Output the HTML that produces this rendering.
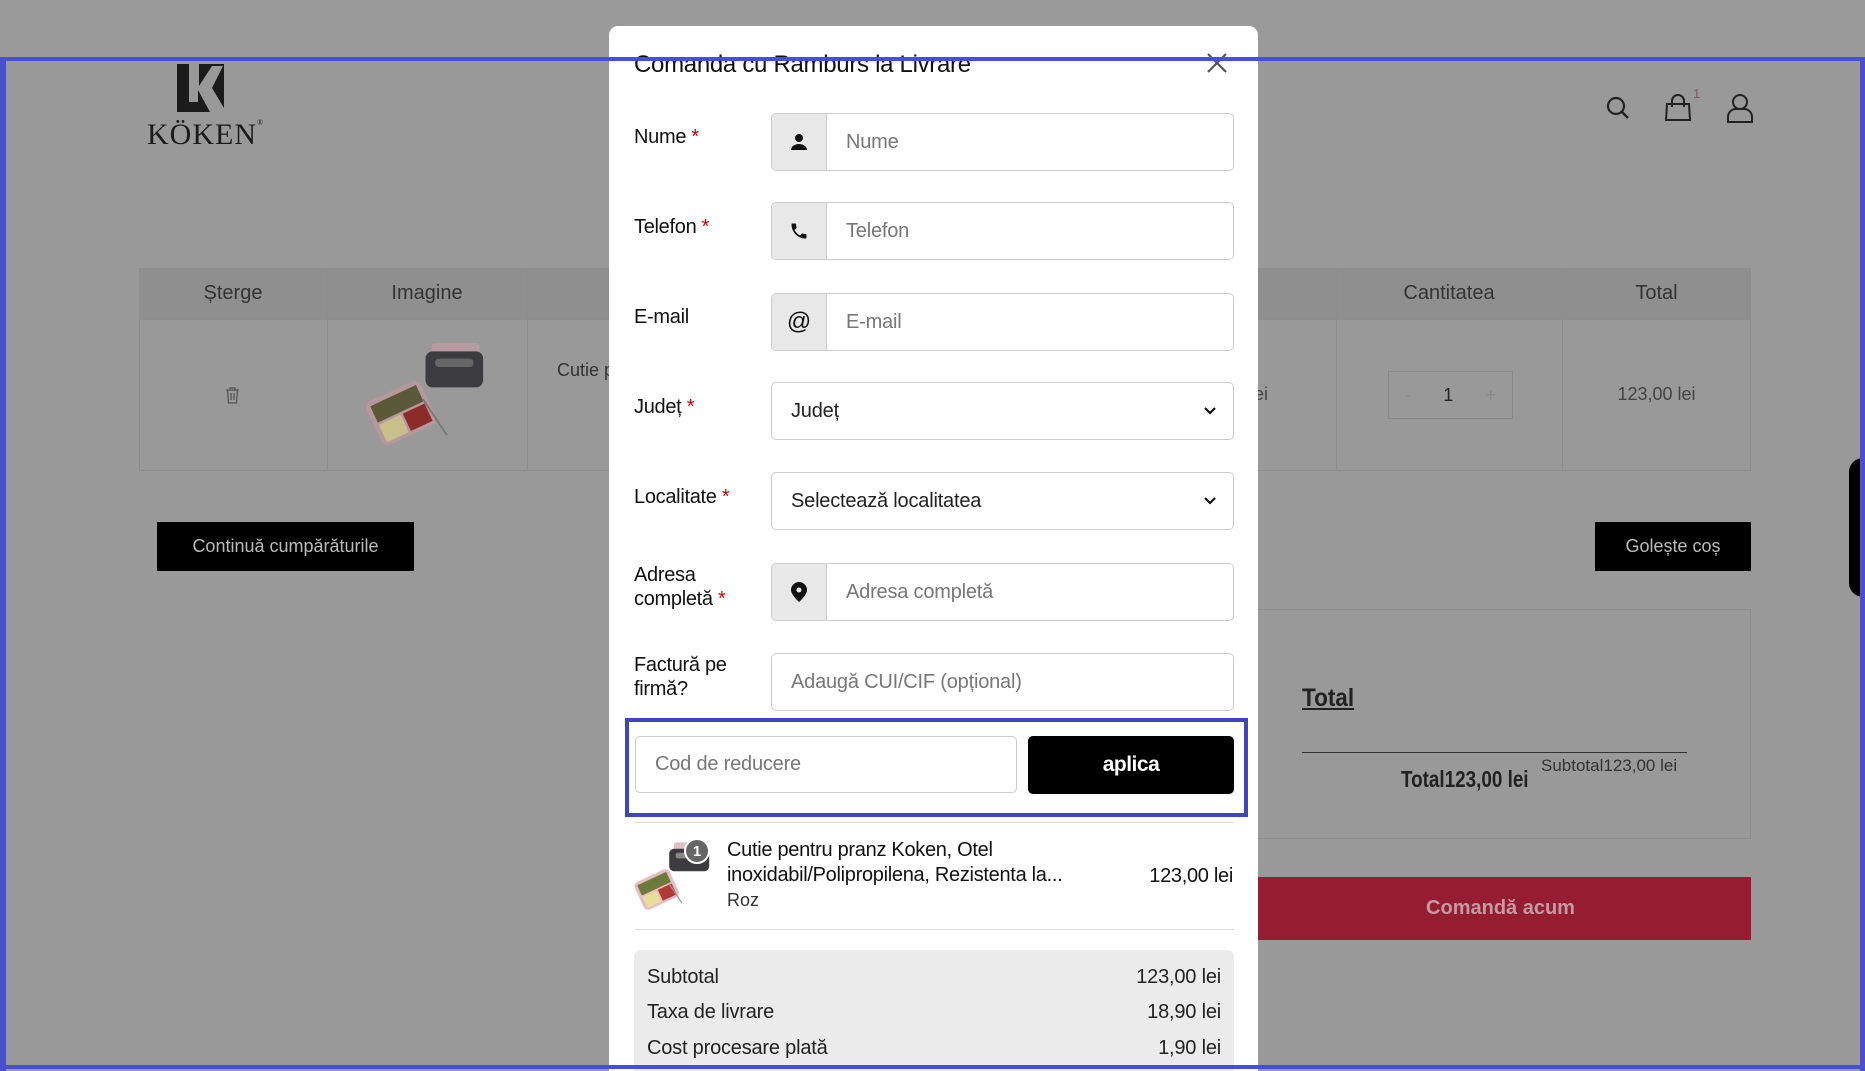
<!DOCTYPE html>
<html><head><meta charset="utf-8">
<style>
*{box-sizing:border-box;margin:0;padding:0}
html,body{width:1865px;height:1071px;overflow:hidden}
body{background:#999;font-family:"Liberation Sans","DejaVu Sans",sans-serif;position:relative;color:#222}
.abs{position:absolute}
.pg{color:#333}
.th{background:#8f8f8f}
.cell{border:1px solid #8d8d8d}
.btn{background:#000;color:#bbb;font-size:18px;display:flex;align-items:center;justify-content:center}
#modal{position:absolute;left:609px;top:26px;width:649px;height:1045px;background:#fff;border-radius:9px 9px 0 0;overflow:hidden}
.lbl{position:absolute;left:25px;font-size:20px;color:#111;letter-spacing:-0.3px;line-height:24px}
.req{color:#c00}
.inp{position:absolute;left:162px;width:463px;height:58px;border:1px solid #ccc;border-radius:5px;display:flex;align-items:center;font-size:20px;color:#777;overflow:hidden;letter-spacing:-0.2px}
.add{width:55px;height:100%;background:#e8e8e8;border-right:1px solid #ccc;display:flex;align-items:center;justify-content:center;flex:none}
.inp .t{padding-left:19px}
.sel{color:#222}
.chev{position:absolute;right:16px;top:21px}
.sr{position:absolute;left:13px;right:13px;display:flex;justify-content:space-between;font-size:20px;color:#222;letter-spacing:-0.2px}
</style></head><body>
<div class="abs" style="left:0;top:0;width:1865px;height:59px;background:#9a9a9a"></div>
<svg class="abs" style="left:176px;top:64px" width="50" height="50" viewBox="0 0 50 50"><rect x="1" y="0" width="47" height="48" fill="#1b1b1b"/><path d="M13 0 L13 38 L22 38 L22 26 L34 48 L48 48 L48 44 L36 24 L47 2 L36 2 L23 22 L23 0 Z" fill="#999"/></svg>
<div class="abs" style="left:147px;top:118px;font-size:30px;font-family:'Liberation Serif',serif;color:#1b1b1b;letter-spacing:1px">KÖKEN<span style="font-size:8px;vertical-align:top">®</span></div>
<svg class="abs" style="left:1605px;top:95px" width="26" height="26" viewBox="0 0 26 26"><circle cx="11" cy="11" r="8" fill="none" stroke="#222" stroke-width="2.2"/><path d="M17 17 L23 23" stroke="#222" stroke-width="2.4"/></svg>
<svg class="abs" style="left:1664px;top:93px" width="28" height="30" viewBox="0 0 28 30"><path d="M3 11 H25 L26 27 H2 Z" fill="none" stroke="#222" stroke-width="2"/><path d="M8 14 V8 a6 6 0 0 1 12 0 V14" fill="none" stroke="#222" stroke-width="2"/></svg>
<div class="abs" style="left:1693px;top:86px;font-size:13px;color:#7a5a66">1</div>
<svg class="abs" style="left:1726px;top:92px" width="28" height="32" viewBox="0 0 28 32"><circle cx="14" cy="10" r="7" fill="none" stroke="#222" stroke-width="2"/><path d="M2 30 V25 a8 8 0 0 1 8 -8 H18 a8 8 0 0 1 8 8 V30 Z" fill="none" stroke="#222" stroke-width="2"/></svg>
<div class="abs th" style="left:139px;top:268px;width:1612px;height:51px"></div>
<div class="abs cell" style="left:139px;top:268px;width:1612px;height:203px"></div>
<div class="abs" style="left:139px;top:319px;width:1612px;height:1px;background:#8d8d8d"></div>
<div class="abs" style="left:327px;top:268px;width:1px;height:203px;background:#8d8d8d"></div>
<div class="abs" style="left:527px;top:268px;width:1px;height:203px;background:#8d8d8d"></div>
<div class="abs" style="left:1336px;top:268px;width:1px;height:203px;background:#8d8d8d"></div>
<div class="abs" style="left:1562px;top:268px;width:1px;height:203px;background:#8d8d8d"></div>
<div class="abs pg" style="left:139px;width:188px;top:282px;text-align:center;font-size:20px">Șterge</div>
<div class="abs pg" style="left:327px;width:200px;top:282px;text-align:center;font-size:20px">Imagine</div>
<div class="abs pg" style="left:1336px;width:226px;top:282px;text-align:center;font-size:20px">Cantitatea</div>
<div class="abs pg" style="left:1562px;width:189px;top:282px;text-align:center;font-size:20px">Total</div>
<div class="abs pg" style="left:1250px;top:384px;font-size:18px;color:#444">lei</div>
<svg class="abs" style="left:225px;top:387px" width="15" height="17" viewBox="0 0 15 17"><path d="M1 3 H14 M5 3 V1 H10 V3 M2.5 3 L3.5 16 H11.5 L12.5 3 M6 6 V13 M9 6 V13" fill="none" stroke="#555" stroke-width="1.3"/></svg>
<div class="abs" style="left:557px;top:360px;font-size:18px;color:#333">Cutie p</div>
<svg class="abs" style="left:363px;top:337px" width="125" height="120" viewBox="0 0 100 100">
<rect x="55" y="5" width="40" height="30" rx="3" fill="#b79aa0"/>
<rect x="50" y="12" width="48" height="30" rx="6" fill="#3c3c40"/>
<rect x="58" y="18" width="32" height="7" rx="3" fill="#666"/>
<g transform="rotate(-25 28 62)"><rect x="4" y="44" width="50" height="40" rx="6" fill="#b7979e"/><rect x="8" y="48" width="42" height="15" fill="#5a5a38"/><rect x="8" y="65" width="20" height="16" fill="#c8bf8a"/><rect x="30" y="65" width="20" height="16" fill="#8b2c2a"/></g>
<path d="M48 52 L68 82" stroke="#777" stroke-width="1.5"/>
</svg>
<div class="abs" style="left:1388px;top:371px;width:125px;height:48px;border:1px solid #888;display:flex;align-items:center;justify-content:space-around;font-size:18px;color:#222"><span style="color:#888">-</span><span>1</span><span style="color:#888">+</span></div>
<div class="abs" style="left:1562px;width:189px;top:384px;text-align:center;font-size:18px;color:#444">123,00 lei</div>
<div class="abs btn" style="left:157px;top:522px;width:257px;height:49px">Continuă cumpărăturile</div>
<div class="abs btn" style="left:1595px;top:522px;width:156px;height:49px">Golește coș</div>
<div class="abs" style="left:1250px;top:609px;width:501px;height:230px;border:1px solid #8f8f8f"></div>
<div class="abs" style="left:1302px;top:684px;font-size:25px;font-weight:bold;color:#222;text-decoration:underline;transform:scaleX(0.9);transform-origin:left">Total</div>
<div class="abs" style="left:1302px;top:752px;width:385px;height:1px;background:#333"></div>
<div class="abs" style="left:1401px;top:766px;font-size:23px;font-weight:bold;color:#222;transform:scaleX(0.82);transform-origin:left;white-space:nowrap">Total123,00 lei</div>
<div class="abs" style="left:1541px;top:756px;font-size:17px;color:#333">Subtotal123,00 lei</div>
<div class="abs" style="left:1250px;top:877px;width:501px;height:63px;background:#961c32;display:flex;align-items:center;justify-content:center;color:#c49aa3;font-size:20px;font-weight:bold">Comandă acum</div>
<div class="abs" style="left:1849px;top:458px;width:16px;height:139px;background:#000;border-radius:14px 0 0 14px"></div>

<div id="modal">
<div class="abs" style="left:25px;top:25px;font-size:24px;color:#111;letter-spacing:-0.3px">Comanda cu Ramburs la Livrare</div>
<svg class="abs" style="left:597px;top:26px" width="22" height="22" viewBox="0 0 22 22"><path d="M2 2 L20 20 M20 2 L2 20" stroke="#555" stroke-width="2.2"/></svg>

<div class="lbl" style="top:99px">Nume <span class="req">*</span></div>
<div class="inp" style="top:87px"><div class="add"><svg width="18" height="18" viewBox="0 0 18 18"><circle cx="9" cy="5" r="4" fill="#111"/><path d="M1 17 a8 6 0 0 1 16 0 Z" fill="#111"/></svg></div><span class="t">Nume</span></div>

<div class="lbl" style="top:189px">Telefon <span class="req">*</span></div>
<div class="inp" style="top:176px"><div class="add"><svg width="20" height="20" viewBox="0 0 24 24"><path d="M6.6 10.8c1.4 2.8 3.8 5.1 6.6 6.6l2.2-2.2c.3-.3.7-.4 1-.2 1.1.4 2.3.6 3.6.6.6 0 1 .4 1 1V20c0 .6-.4 1-1 1C10.6 21 3 13.4 3 4c0-.6.4-1 1-1h3.5c.6 0 1 .4 1 1 0 1.3.2 2.5.6 3.6.1.3 0 .7-.2 1z" fill="#111"/></svg></div><span class="t">Telefon</span></div>

<div class="lbl" style="top:279px">E-mail</div>
<div class="inp" style="top:267px"><div class="add"><span style="font-size:24px;color:#111">@</span></div><span class="t">E-mail</span></div>

<div class="lbl" style="top:369px">Județ <span class="req">*</span></div>
<div class="inp sel" style="top:356px"><span class="t">Județ</span><svg class="chev" width="14" height="14" viewBox="0 0 14 14"><path d="M2 4 L7 9 L12 4" fill="none" stroke="#111" stroke-width="2.2"/></svg></div>

<div class="lbl" style="top:459px">Localitate <span class="req">*</span></div>
<div class="inp sel" style="top:446px"><span class="t">Selectează localitatea</span><svg class="chev" width="14" height="14" viewBox="0 0 14 14"><path d="M2 4 L7 9 L12 4" fill="none" stroke="#111" stroke-width="2.2"/></svg></div>

<div class="lbl" style="top:537px">Adresa<br>completă <span class="req">*</span></div>
<div class="inp" style="top:537px"><div class="add"><svg width="16" height="20" viewBox="0 0 16 20"><path d="M8 0 a8 8 0 0 1 8 8 c0 5 -8 12 -8 12 S0 13 0 8 A8 8 0 0 1 8 0z" fill="#111"/><circle cx="8" cy="8" r="2.5" fill="#e8e8e8"/></svg></div><span class="t">Adresa completă</span></div>

<div class="lbl" style="top:627px">Factură pe<br>firmă?</div>
<div class="inp" style="top:627px"><span class="t">Adaugă CUI/CIF (opțional)</span></div>

<div class="inp" style="left:26px;top:710px;width:382px;height:57px"><span class="t">Cod de reducere</span></div>
<div class="abs" style="left:419px;top:710px;width:206px;height:58px;background:#000;border-radius:5px;color:#fff;font-weight:bold;font-size:21px;display:flex;align-items:center;justify-content:center;letter-spacing:-0.5px">aplica</div>

<div class="abs" style="left:25px;top:796px;width:600px;height:1px;background:#ddd"></div>
<svg class="abs" style="left:25px;top:810px" width="80" height="80" viewBox="0 0 100 100">
<rect x="50" y="8" width="40" height="28" rx="3" fill="#e3bec6"/>
<rect x="44" y="16" width="50" height="28" rx="6" fill="#3c3c40"/>
<rect x="52" y="21" width="32" height="7" rx="3" fill="#888"/>
<g transform="rotate(-25 28 66)"><rect x="4" y="48" width="48" height="38" rx="6" fill="#e6bcc5"/><rect x="8" y="52" width="40" height="14" fill="#6e7a3a"/><rect x="8" y="68" width="19" height="15" fill="#e9dd9a"/><rect x="29" y="68" width="19" height="15" fill="#b33a34"/></g>
<path d="M44 60 L60 84" stroke="#999" stroke-width="1.5"/>
</svg>
<div class="abs" style="left:75px;top:812px;width:26px;height:26px;border-radius:13px;background:#666;border:2px solid #fff;color:#fff;font-size:15px;font-weight:bold;display:flex;align-items:center;justify-content:center">1</div>
<div class="abs" style="left:118px;top:812px;font-size:20px;color:#111;line-height:25px;letter-spacing:-0.3px">Cutie pentru pranz Koken, Otel<br>inoxidabil/Polipropilena, Rezistenta la...</div>
<div class="abs" style="left:118px;top:864px;font-size:18px;color:#333">Roz</div>
<div class="abs" style="right:25px;top:839px;font-size:20px;color:#111;letter-spacing:-0.3px">123,00 lei</div>
<div class="abs" style="left:25px;top:903px;width:600px;height:1px;background:#ddd"></div>

<div class="abs" style="left:25px;top:924px;width:600px;height:200px;background:#ebebeb;border-radius:7px">
<div class="sr" style="top:16px"><span>Subtotal</span><span>123,00 lei</span></div>
<div class="sr" style="top:51px"><span>Taxa de livrare</span><span>18,90 lei</span></div>
<div class="sr" style="top:87px"><span>Cost procesare plată</span><span>1,90 lei</span></div>
</div>
</div>

<div class="abs" style="left:0;top:57px;width:1865px;height:4px;background:#4a4fcf"></div>
<div class="abs" style="left:0;top:57px;width:6px;height:1014px;background:#4a4fcf"></div>
<div class="abs" style="left:1860px;top:57px;width:5px;height:1014px;background:#4a4fcf"></div>
<div class="abs" style="left:0;top:1065px;width:1865px;height:4px;background:#4a4fcf"></div>
<div class="abs" style="left:625px;top:718px;width:623px;height:99px;border:4px solid #3f45c0"></div>
</body></html>
